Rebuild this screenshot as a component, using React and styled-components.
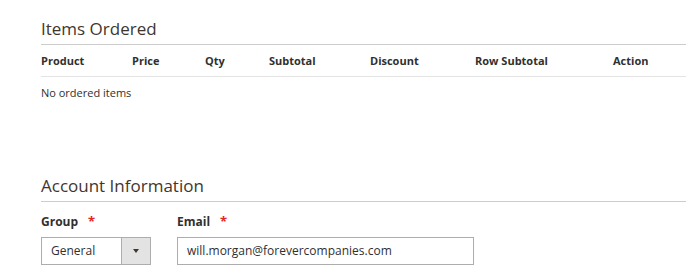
import React from "react";
import styled, { createGlobalStyle } from "styled-components";

const Global = createGlobalStyle`
  html, body { margin: 0; padding: 0; background: #fff; }
  body { font-family: "Open Sans", "Liberation Sans", sans-serif; color: #303030; }
`;

const Page = styled.div`
  padding: 17px 0 0 41px;
  width: 645px;
`;

const Section = styled.section`
  margin-top: ${(p) => p.$gap || 0}px;
`;

const SectionTitle = styled.h2`
  margin: 0;
  font-size: 17px;
  font-weight: 400;
  line-height: 23px;
  color: #41362f;
  padding-bottom: 4px;
  border-bottom: 1px solid #cccccc;
`;

const Table = styled.table`
  width: 645px;
  table-layout: fixed;
  border-collapse: collapse;
  font-size: 11px;
  line-height: 15px;
`;

const Th = styled.th`
  text-align: left;
  font-weight: 700;
  color: #303030;
  padding: 8px 0;
  border-bottom: 1px solid #e3e3e3;
  white-space: nowrap;
`;

const Td = styled.td`
  padding: 8px 0 6px;
  color: #303030;
`;

const FieldRow = styled.div`
  display: flex;
  gap: 26px;
  margin-top: 11px;
`;

const Field = styled.div`
  width: ${(p) => p.$w}px;
`;

const Label = styled.label`
  display: block;
  font-size: 12px;
  font-weight: 700;
  line-height: 16px;
  color: #303030;
  margin-bottom: 7px;
  &::after {
    content: "*";
    color: #e22626;
    margin-left: 10px;
    font-size: 13px;
  }
`;

const SelectBox = styled.div`
  box-sizing: border-box;
  height: 28px;
  border: 1px solid #adadad;
  display: flex;
  font-size: 12px;
  line-height: 16px;
  color: #303030;
`;

const SelectValue = styled.div`
  flex: 1;
  padding: 5px 0 0 9px;
`;

const SelectArrow = styled.div`
  width: 28px;
  background: #e3e3e3;
  border-left: 1px solid #adadad;
  display: flex;
  align-items: center;
  justify-content: center;
  &::after {
    content: "";
    border-left: 3px solid transparent;
    border-right: 3px solid transparent;
    border-top: 4px solid #41362f;
  }
`;

const Input = styled.div`
  box-sizing: border-box;
  height: 28px;
  border: 1px solid #adadad;
  padding: 5px 0 0 9px;
  font-size: 12px;
  line-height: 16px;
  color: #303030;
`;

const columns = [
  ["Product", 91],
  ["Price", 73],
  ["Qty", 64],
  ["Subtotal", 101],
  ["Discount", 105],
  ["Row Subtotal", 138],
  ["Action", 73],
];

export default function App() {
  return (
    <>
      <Global />
      <Page>
        <Section>
          <SectionTitle>Items Ordered</SectionTitle>
          <Table>
            <colgroup>
              {columns.map(([n, w]) => (
                <col key={n} style={{ width: w }} />
              ))}
            </colgroup>
            <thead>
              <tr>
                {columns.map(([n]) => (
                  <Th key={n}>{n}</Th>
                ))}
              </tr>
            </thead>
            <tbody>
              <tr>
                <Td colSpan={7}>No ordered items</Td>
              </tr>
            </tbody>
          </Table>
        </Section>
        <Section $gap={68}>
          <SectionTitle>Account Information</SectionTitle>
          <FieldRow>
            <Field $w={110}>
              <Label>Group</Label>
              <SelectBox>
                <SelectValue>General</SelectValue>
                <SelectArrow />
              </SelectBox>
            </Field>
            <Field $w={297}>
              <Label>Email</Label>
              <Input>will.morgan@forevercompanies.com</Input>
            </Field>
          </FieldRow>
        </Section>
      </Page>
    </>
  );
}
